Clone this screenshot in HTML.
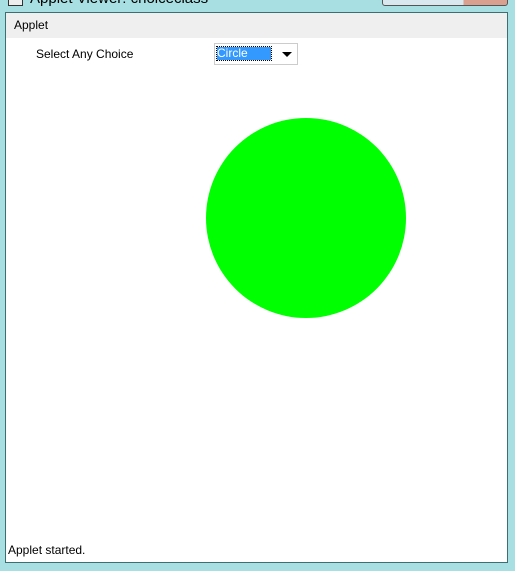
<!DOCTYPE html>
<html><head><style>
body{margin:0;width:515px;height:571px;overflow:hidden;background:#a8dfe2;font-family:"Liberation Sans",sans-serif;position:relative}
.icon{position:absolute;left:8px;top:-6px;width:13px;height:10px;border:1px solid #333;background:#eee}
.title{position:absolute;left:30px;top:-10px;font-size:15px;color:#000}
.btns{position:absolute;left:382px;top:-8px;width:124px;height:12px;border:1px solid #555;border-radius:3px;background:linear-gradient(90deg,#d8e8ee 0 50%,#d8e8ee 50% 65%,#d9a08f 65%)}
.win{position:absolute;left:5px;top:12px;width:501px;height:549px;border:1px solid #3d6e72;background:#fff}
.menu{position:absolute;left:0;top:0;width:501px;height:25px;background:#efefef;font-size:12px}
.menu span{position:absolute;left:8px;top:5px}
.lbl{position:absolute;left:30px;top:34px;font-size:12px}
.sel{position:absolute;left:208px;top:30px;width:82px;height:20px;border:1px solid #ccc;background:#fff}
.sel .v{position:absolute;left:2px;top:3px;width:54px;height:13px;background:#3399ff;color:#fff;font-size:12px;line-height:13px;outline:1px dotted #000}
.sel .a{position:absolute;left:67px;top:8px;width:0;height:0;border-left:5px solid transparent;border-right:5px solid transparent;border-top:5px solid #000}
.circ{position:absolute;left:200px;top:105px;width:200px;height:200px;border-radius:50%;background:#00ff00}
.status{position:absolute;left:2px;top:530px;font-size:12px}
</style></head><body>
<div class="icon"></div>
<div class="title">Applet Viewer: choiceclass</div>
<div class="btns"></div>
<div class="win">
<div class="menu"><span>Applet</span></div>
<div class="lbl">Select Any Choice</div>
<div class="sel"><div class="v">Circle</div><div class="a"></div></div>
<div class="circ"></div>
<div class="status">Applet started.</div>
</div>
</body></html>
